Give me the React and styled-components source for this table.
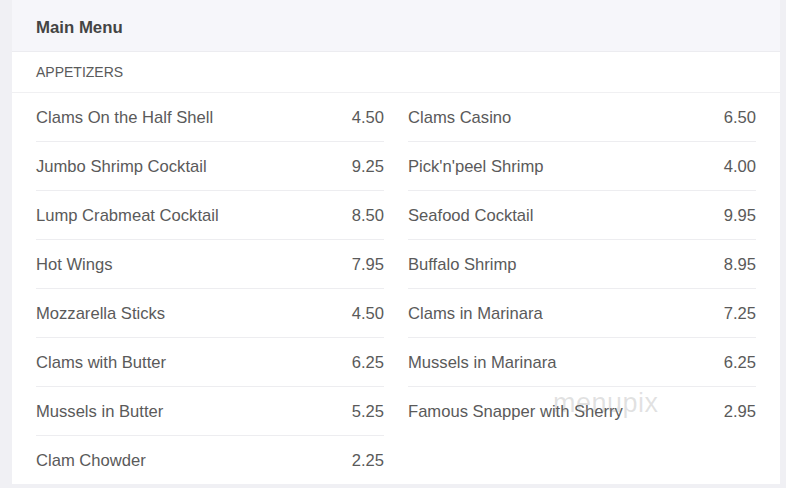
import React from "react";
import styled, { createGlobalStyle } from "styled-components";

const GlobalStyle = createGlobalStyle`
  html, body {
    margin: 0;
    padding: 0;
    background: #f0f0f4;
  }
  body {
    font-family: "Liberation Sans", Arial, sans-serif;
  }
`;

// page wrapper with side gutters
const Page = styled.div`
  padding: 0 6px 3px 12px;
`;

const Card = styled.section`
  position: relative;
  background: #fff;
`;

const Header = styled.h2`
  margin: 0;
  height: 52px;
  padding: 4px 24px 0;
  box-sizing: border-box;
  display: flex;
  align-items: center;
  background: #f6f6fa;
  border-bottom: 1px solid #ececf0;
  font-size: 16.8px;
  font-weight: bold;
  color: #444;
`;

const Category = styled.div`
  height: 40px;
  padding: 0 24px;
  display: flex;
  align-items: center;
  border-bottom: 1px solid #f0f0f2;
  font-size: 14px;
  color: #5a5a5a;
  text-transform: uppercase;
`;

// two columns of menu items
const Columns = styled.div`
  display: grid;
  grid-template-columns: 1fr 1fr;
  column-gap: 24px;
  padding: 0 24px;
`;

const Column = styled.ul`
  list-style: none;
  margin: 0;
  padding: 0;
`;

const Item = styled.li`
  height: 47px;
  padding-top: 1px;
  display: flex;
  align-items: center;
  justify-content: space-between;
  border-bottom: 1px solid #ededf0;
  font-size: 16.6px;
  color: #5a5a5a;

  &:last-child {
    border-bottom: none;
  }
`;

const Price = styled.span`
  color: #5a5a5a;
`;

const Watermark = styled.div`
  position: absolute;
  left: 541px;
  top: 388px;
  font-size: 27px;
  letter-spacing: 0.5px;
  color: rgba(150, 150, 150, 0.28);
  pointer-events: none;
`;

const left = [
  ["Clams On the Half Shell", "4.50"],
  ["Jumbo Shrimp Cocktail", "9.25"],
  ["Lump Crabmeat Cocktail", "8.50"],
  ["Hot Wings", "7.95"],
  ["Mozzarella Sticks", "4.50"],
  ["Clams with Butter", "6.25"],
  ["Mussels in Butter", "5.25"],
  ["Clam Chowder", "2.25"],
];

const right = [
  ["Clams Casino", "6.50"],
  ["Pick'n'peel Shrimp", "4.00"],
  ["Seafood Cocktail", "9.95"],
  ["Buffalo Shrimp", "8.95"],
  ["Clams in Marinara", "7.25"],
  ["Mussels in Marinara", "6.25"],
  ["Famous Snapper with Sherry", "2.95"],
];

function MenuColumn({ items }) {
  return (
    <Column>
      {items.map(([name, price]) => (
        <Item key={name}>
          <span>{name}</span>
          <Price>{price}</Price>
        </Item>
      ))}
    </Column>
  );
}

export default function App() {
  return (
    <>
      <GlobalStyle />
      <Page>
        <Card>
          <Header>Main Menu</Header>
          <Category>Appetizers</Category>
          <Columns>
            <MenuColumn items={left} />
            <MenuColumn items={right} />
          </Columns>
          <Watermark>menupix</Watermark>
        </Card>
      </Page>
    </>
  );
}
